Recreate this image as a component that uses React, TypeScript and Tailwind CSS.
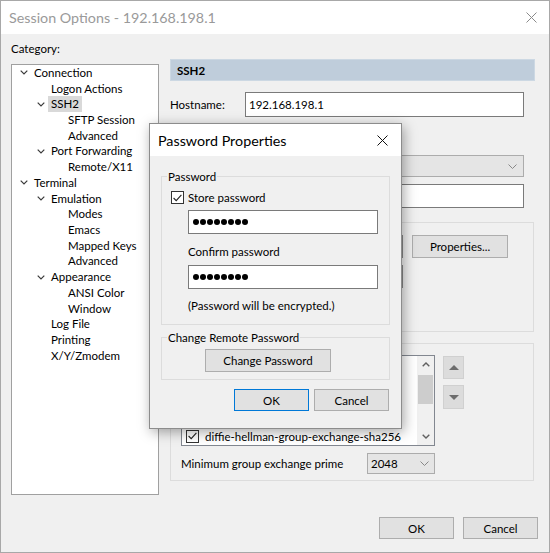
import React from 'react';

const tree: { l: number; t: string; c?: boolean; sel?: boolean }[] = [
  { l: 0, t: 'Connection', c: true },
  { l: 1, t: 'Logon Actions' },
  { l: 1, t: 'SSH2', c: true, sel: true },
  { l: 2, t: 'SFTP Session' },
  { l: 2, t: 'Advanced' },
  { l: 1, t: 'Port Forwarding', c: true },
  { l: 2, t: 'Remote/X11' },
  { l: 0, t: 'Terminal', c: true },
  { l: 1, t: 'Emulation', c: true },
  { l: 2, t: 'Modes' },
  { l: 2, t: 'Emacs' },
  { l: 2, t: 'Mapped Keys' },
  { l: 2, t: 'Advanced' },
  { l: 1, t: 'Appearance', c: true },
  { l: 2, t: 'ANSI Color' },
  { l: 2, t: 'Window' },
  { l: 1, t: 'Log File' },
  { l: 1, t: 'Printing' },
  { l: 1, t: 'X/Y/Zmodem' },
];

const pads = ['pl-[8px]', 'pl-[25px]', 'pl-[42px]'];

function XIcon({ color }: { color: string }) {
  return (
    <svg width="11" height="11" viewBox="0 0 11 11">
      <path d="M0.5 0.5 L10.5 10.5 M10.5 0.5 L0.5 10.5" stroke={color} strokeWidth="1" fill="none" />
    </svg>
  );
}

function Chevron() {
  return (
    <svg width="8" height="5" viewBox="0 0 8 5">
      <path d="M0.7 0.7 L4 4 L7.3 0.7" stroke="#3a3a3a" strokeWidth="1.2" fill="none" />
    </svg>
  );
}

function DropChevron() {
  return (
    <svg width="9" height="5" viewBox="0 0 9 5">
      <path d="M0.5 0.5 L4.5 4.5 L8.5 0.5" stroke="#888" strokeWidth="1" fill="none" />
    </svg>
  );
}

function Check() {
  return (
    <div className="w-[13px] h-[13px] border border-[#333] bg-white flex items-center justify-center shrink-0">
      <svg width="9" height="8" viewBox="0 0 9 8">
        <path d="M0.6 4 L3.2 6.6 L8.4 0.8" stroke="#222" strokeWidth="1.1" fill="none" />
      </svg>
    </div>
  );
}

function Dots() {
  return (
    <div className="flex gap-[1px]">
      {Array.from({ length: 8 }).map((_, i) => (
        <div key={i} className="w-[6px] h-[6px] rounded-full bg-black" />
      ))}
    </div>
  );
}

function Btn({ children, className }: { children?: React.ReactNode; className: string }) {
  return (
    <div className={`flex items-center justify-center bg-[#e1e1e1] border border-[#adadad] ${className}`}>
      {children}
    </div>
  );
}

export default function App() {
  return (
    <div className="w-[550px] h-[553px] bg-white font-['Lato',sans-serif] text-[11.5px] text-black leading-[15px]">
      <div className="relative w-[550px] h-[553px] border border-[#a8a8a8] bg-[#f0f0f0] flex flex-col">
        {/* title bar */}
        <div className="h-[33px] shrink-0 bg-white flex items-center justify-between pl-[8px] pr-[12px]">
          <span className="text-[14.3px] text-[#9a9a9a]">Session Options - 192.168.198.1</span>
          <XIcon color="#8a8a8a" />
        </div>

        {/* content */}
        <div className="flex flex-1 min-h-0">
          <div className="w-[158px] shrink-0 pl-[10px] pt-[7px]">
            <div className="h-[15px]">Category:</div>
            <div className="mt-[8px] w-[148px] h-[431px] border border-[#a0a0a0] bg-white">
              {tree.map((r, i) => (
                <div key={i} className={`h-[15.72px] flex items-center ${pads[r.l]}`}>
                  <div className="w-[11px] shrink-0 flex items-center">{r.c ? <Chevron /> : null}</div>
                  <span className={`px-[3px] leading-[16px] ${r.sel ? 'bg-[#d9d9d9]' : ''}`}>{r.t}</span>
                </div>
              ))}
            </div>
          </div>

          <div className="ml-[11px] pt-[25px] w-[365px] shrink-0">
            <div className="h-[22px] bg-[#bfcddb] border border-[#ccd8e3] flex items-center pl-[6px] font-bold">SSH2</div>

            <div className="mt-[11px] h-[25px] flex items-center">
              <div className="w-[75px]">Hostname:</div>
              <div className="w-[279px] h-[25px] border border-[#7a7a7a] bg-white flex items-center pl-[3px]">192.168.198.1</div>
            </div>

            <div className="mt-[11px] h-[23px] flex items-center">
              <div className="w-[75px]" />
              <div className="w-[56px] h-[23px] border border-[#7a7a7a] bg-white" />
            </div>

            <div className="mt-[4px] h-[22px] flex items-center">
              <div className="w-[75px]" />
              <div className="w-[279px] h-[22px] border border-[#acacac] bg-[#e5e5e5] flex items-center justify-end pr-[6px]">
                <DropChevron />
              </div>
            </div>

            <div className="mt-[7px] h-[24px] flex items-center">
              <div className="w-[75px]" />
              <div className="w-[279px] h-[24px] border border-[#7a7a7a] bg-white" />
            </div>

            {/* Authentication group */}
            <div className="mt-[14px] w-[364px] h-[110px] border border-[#dcdcdc]">
              <div className="mt-[12px] pl-[10px] flex items-start">
                <div className="w-[195px] h-[84px] border border-[#828790] bg-white" />
                <div className="ml-[5px] flex flex-col gap-[7px]">
                  <div className="w-[22px] h-[23px] bg-[#dcdcdc] border border-[#8a8a8a]" />
                  <div className="w-[22px] h-[23px] bg-[#dcdcdc] border border-[#8a8a8a]" />
                </div>
                <Btn className="ml-[9px] w-[96px] h-[23px]">Properties...</Btn>
              </div>
            </div>

            {/* Key exchange group */}
            <div className="mt-[11px] w-[364px] border border-[#dcdcdc] pb-[6px]">
              <div className="mt-[11px] pl-[10px] flex items-start">
                <div className="w-[254px] h-[91px] border border-[#828790] bg-white flex">
                  <div className="flex-1 flex flex-col justify-end pl-[4px] overflow-hidden">
                    <div className="h-[18px] shrink-0 flex items-center gap-[6px]">
                      <Check />
                      <span>diffie-hellman-group-exchange-sha256</span>
                    </div>
                  </div>
                  <div className="w-[17px] bg-[#f0f0f0] flex flex-col">
                    <div className="h-[17px] flex items-center justify-center">
                      <svg width="8" height="5" viewBox="0 0 8 5">
                        <path d="M0.7 4.3 L4 1 L7.3 4.3" stroke="#606060" strokeWidth="1.4" fill="none" />
                      </svg>
                    </div>
                    <div className="mt-[2px] mx-[1px] h-[29px] bg-[#cdcdcd]" />
                    <div className="flex-1" />
                    <div className="h-[17px] flex items-center justify-center">
                      <svg width="8" height="5" viewBox="0 0 8 5">
                        <path d="M0.7 0.7 L4 4 L7.3 0.7" stroke="#606060" strokeWidth="1.4" fill="none" />
                      </svg>
                    </div>
                  </div>
                </div>
                <div className="ml-[8px] mt-[1px] flex flex-col gap-[6px]">
                  <div className="w-[21px] h-[23px] bg-[#dcdcdc] border border-[#d0d0d0] flex items-center justify-center">
                    <svg width="10" height="5" viewBox="0 0 10 5"><path d="M0 5 L5 0 L10 5 Z" fill="#6d6d6d" /></svg>
                  </div>
                  <div className="w-[21px] h-[24px] bg-[#dcdcdc] border border-[#d0d0d0] flex items-center justify-center">
                    <svg width="10" height="5" viewBox="0 0 10 5"><path d="M0 0 L10 0 L5 5 Z" fill="#6d6d6d" /></svg>
                  </div>
                </div>
              </div>
              <div className="mt-[7px] pl-[10px] h-[21px] flex items-center">
                <div className="w-[186px]">Minimum group exchange prime</div>
                <div className="w-[68px] h-[21px] border border-[#acacac] bg-[#e5e5e5] flex items-center justify-between pl-[3px] pr-[5px]">
                  <span>2048</span>
                  <DropChevron />
                </div>
              </div>
            </div>
          </div>
        </div>

        {/* footer */}
        <div className="shrink-0 flex justify-end gap-[9px] pr-[11px] pb-[13px]">
          <Btn className="w-[75px] h-[22px]">OK</Btn>
          <Btn className="w-[75px] h-[22px]">Cancel</Btn>
        </div>

        {/* modal */}
        <div className="absolute left-[148px] top-[122px] w-[253px] h-[306px] border border-[#8c8c8c] bg-[#f0f0f0] shadow-[2px_3px_12px_rgba(0,0,0,0.35)] flex flex-col">
          <div className="h-[32px] shrink-0 bg-white flex items-center justify-between pl-[8px] pr-[13px]">
            <span className="text-[14.3px]">Password Properties</span>
            <XIcon color="#111" />
          </div>
          <div className="pl-[11px] pr-[11px] pt-[20px]">
            <div className="w-[229px] border border-[#dcdcdc] pb-[11px]">
              <div className="-mt-[8px] ml-[5px] px-[1px] h-[15px] w-fit bg-[#f0f0f0]">Password</div>
              <div className="mt-[6px] h-[15px] pl-[9px] flex items-center gap-[4px]">
                <Check />
                <span>Store password</span>
              </div>
              <div className="mt-[5px] ml-[26px] w-[190px] h-[24px] border border-[#7a7a7a] bg-white flex items-center pl-[4px]">
                <Dots />
              </div>
              <div className="mt-[10px] ml-[26px] h-[15px]">Confirm password</div>
              <div className="mt-[6px] ml-[26px] w-[190px] h-[24px] border border-[#7a7a7a] bg-white flex items-center pl-[4px]">
                <Dots />
              </div>
              <div className="mt-[9px] ml-[26px] h-[15px]">(Password will be encrypted.)</div>
            </div>

            <div className="mt-[12px] w-[229px] border border-[#dcdcdc] pb-[7px]">
              <div className="-mt-[8px] ml-[5px] px-[1px] h-[15px] w-fit bg-[#f0f0f0]">Change Remote Password</div>
              <Btn className="mt-[4px] ml-[43px] w-[126px] h-[23px]">Change Password</Btn>
            </div>

            <div className="mt-[9px] flex justify-end gap-[5px] pr-[1px]">
              <Btn className="w-[75px] h-[22px] !border-[#0078d7]">OK</Btn>
              <Btn className="w-[75px] h-[22px]">Cancel</Btn>
            </div>
          </div>
        </div>
      </div>
    </div>
  );
}
